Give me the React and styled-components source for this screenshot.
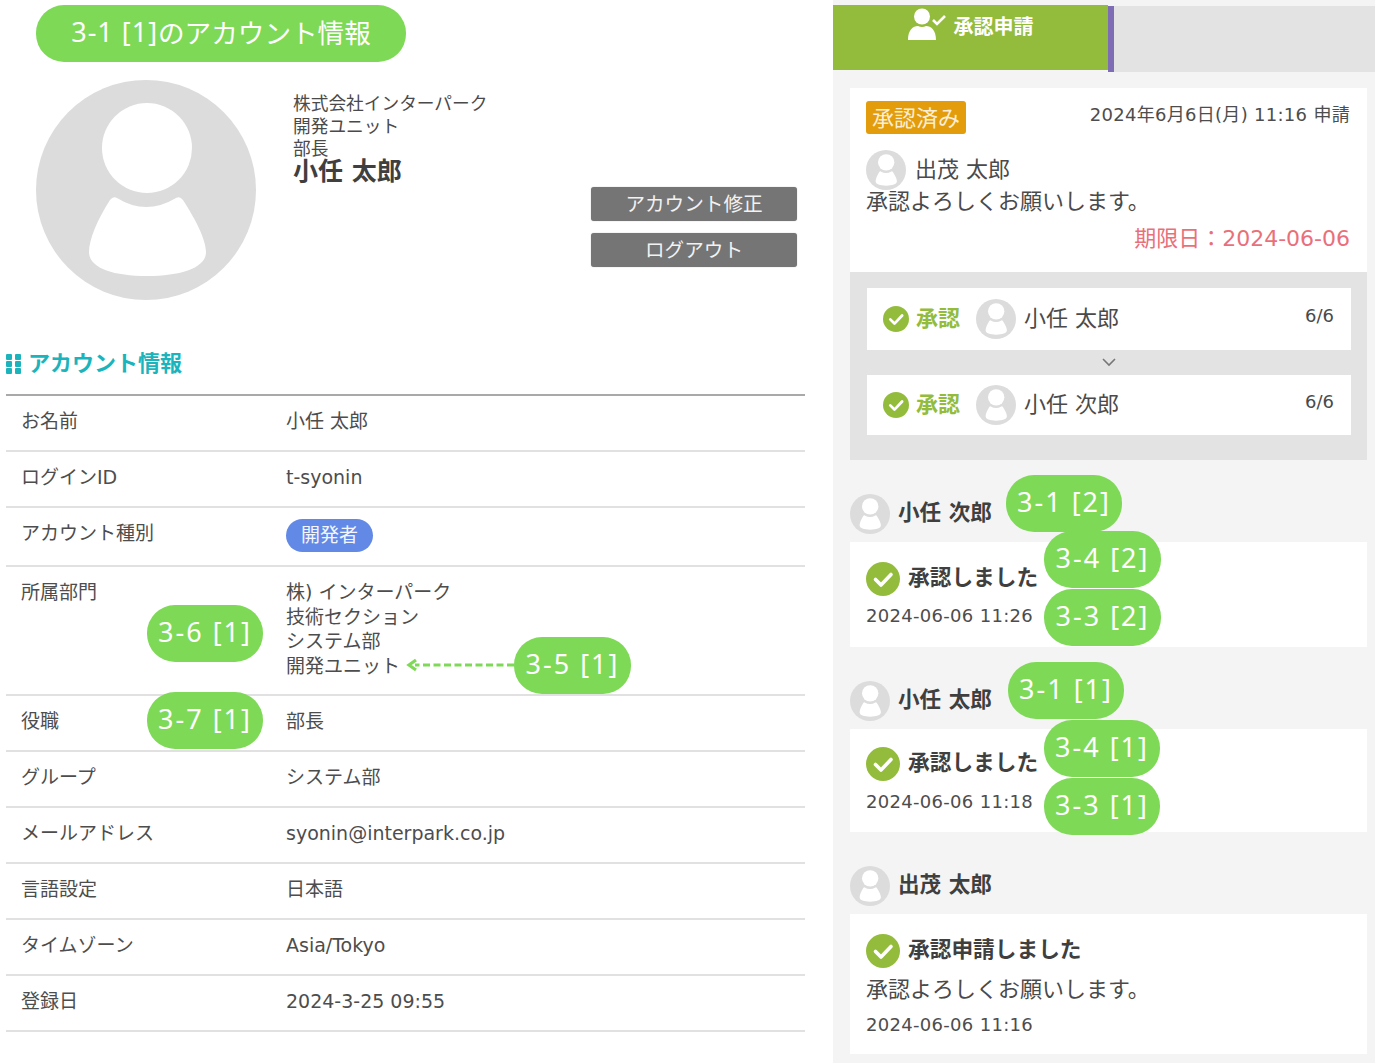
import React from "react";
import styled, { createGlobalStyle } from "styled-components";

const Global = createGlobalStyle`
  html, body { margin: 0; padding: 0; background: #fff; }
  body { font-family: "DejaVu Sans", "Noto Sans CJK JP", sans-serif; color: #4a4a4a; overflow: hidden; }
  * { box-sizing: border-box; }
`;

const Page = styled.div`
  position: relative;
  width: 1375px;
  height: 1063px;
  overflow: hidden;
  display: grid;
  grid-template-columns: 833px 542px;
`;

/* ---------- annotations ---------- */
const Pill = styled.div`
  position: absolute;
  left: ${p => p.$x}px;
  top: ${p => p.$y}px;
  width: ${p => p.$w || 116}px;
  height: 57px;
  border-radius: 28px;
  background: #7ed957;
  color: #fff;
  display: flex;
  align-items: center;
  justify-content: center;
  font-family: "Noto Sans", "Noto Sans CJK JP", sans-serif;
  font-size: 27px;
  white-space: nowrap;
  padding-bottom: 4px;
`;
const PillCode = styled.span`
  letter-spacing: ${p => p.$ls}px;
`;
const PillTail = styled.span`
  font-size: 26.6px;
`;
const ArrowSvg = styled.svg`
  position: absolute;
  left: 405px;
  top: 655px;
`;

/* ---------- left ---------- */
const Left = styled.div`
  padding: 80px 28px 0 6px;
`;
const Profile = styled.div`
  display: grid;
  grid-template-columns: 220px 1fr;
  column-gap: 37px;
  padding-left: 30px;
  height: 220px;
`;
const ProfileBody = styled.div`
  display: flex;
  justify-content: space-between;
  padding: 13px 8px 0 0;
`;
const OrgLine = styled.div`
  font-size: 17.7px;
  line-height: 22.5px;
  color: #4a4a4a;
`;
const OwnerName = styled.div`
  font-size: 25px;
  line-height: 24px;
  font-weight: 700;
  color: #3f3f3f;
  margin-top: -1px;
`;
const Buttons = styled.div`
  display: flex;
  flex-direction: column;
  gap: 12px;
  padding-top: 94px;
`;
const ActionButton = styled.div`
  width: 206px;
  height: 34px;
  padding-bottom: 4px;
  background: #757575;
  color: #f2f2f2;
  border-radius: 3px;
  font-size: 19.6px;
  display: flex;
  align-items: center;
  justify-content: center;
  box-shadow: 0 0 1px #999;
`;
const SectionTitle = styled.h2`
  margin: 47px 0 13px;
  display: flex;
  align-items: center;
  gap: 7px;
  height: 34px;
  font-size: 22px;
  line-height: 34px;
  font-weight: 700;
  color: #1cb4bc;
`;
const Table = styled.div`
  width: 799px;
  border-top: 2px solid #a9a9a9;
`;
const Row = styled.div`
  display: grid;
  grid-template-columns: 265px 1fr;
  padding: 13px 0 16px 15px;
  border-bottom: 2px solid #e1e1e1;
  font-size: 19px;
  line-height: ${p => p.$lh || 25}px;
  color: #4d4d4d;
`;
const Label = styled.div`
  line-height: 25px;
`;
const Value = styled.div`
  font-size: 19px;
`;
const Badge = styled.span`
  display: inline-flex;
  align-items: center;
  justify-content: center;
  width: 87px;
  height: 33px;
  margin: -2px 0 -3px;
  padding-bottom: 2px;
  border-radius: 17px;
  background: #6389e6;
  color: #f4f6ff;
  font-size: 19px;
  vertical-align: top;
`;

/* ---------- right ---------- */
const Right = styled.div`
  background: #f4f4f4;
  padding-top: 5px;
`;
const Tabs = styled.div`
  display: flex;
  height: 67px;
`;
const ActiveTab = styled.div`
  width: 275px;
  height: 65px;
  background: #94bc3c;
  color: #fff;
  display: flex;
  justify-content: center;
  align-items: flex-start;
  gap: 8px;
  padding-top: 3px;
  font-size: 20px;
  font-weight: 700;
`;
const TabLabel = styled.span`
  line-height: 38px;
`;
const IdleTab = styled.div`
  flex: 1;
  height: 66px;
  margin-top: 1px;
  background: #e3e3e3;
  border-left: 6px solid #7e6cb4;
`;
const Content = styled.div`
  padding: 16px 8px 0 17px;
`;
const ApplyCard = styled.div`
  height: 184px;
  background: #fff;
  padding: 13px 17px 0 16px;
`;
const ApplyHead = styled.div`
  display: flex;
  justify-content: space-between;
  align-items: flex-start;
  height: 33px;
`;
const StatusTag = styled.span`
  width: 100px;
  height: 33px;
  padding-bottom: 4px;
  background: #e39c0c;
  color: #fbeed6;
  border-radius: 3px;
  font-size: 22px;
  display: flex;
  align-items: center;
  justify-content: center;
`;
const AppliedAt = styled.span`
  font-size: 18px;
  line-height: 26px;
  letter-spacing: .3px;
  margin-top: 1px;
  color: #4d4d4d;
`;
const Person = styled.div`
  display: flex;
  align-items: center;
  gap: 9px;
  height: 40px;
  margin-top: 16px;
  font-size: 22px;
`;
const NudgedName = styled.span`
  padding-bottom: 6px;
`;
const Message = styled.div`
  font-size: 22px;
  line-height: 26px;
  margin-top: ${p => p.$mt ?? -1}px;
`;
const Deadline = styled.div`
  font-size: 22px;
  line-height: 28px;
  margin-top: 10px;
  text-align: right;
  color: #e9707a;
`;
const FlowBox = styled.div`
  height: 188px;
  background: #e3e3e3;
  padding: 16px 16px 0 17px;
`;
const FlowRow = styled.div`
  height: ${p => p.$h}px;
  background: #fff;
  display: flex;
  align-items: center;
  padding: 0 17px 0 16px;
  font-size: 22px;
`;
const ApproveLabel = styled.span`
  margin: 0 16px 0 7px;
  padding-bottom: 6px;
  font-size: 22px;
  font-weight: 700;
  color: #94bc3c;
`;
const FlowName = styled.span`
  margin-left: 8px;
  padding-bottom: 6px;
`;
const FlowDate = styled.span`
  margin-left: auto;
  font-size: 18px;
  padding-bottom: 8px;
`;
const Chevron = styled.div`
  height: 25px;
  display: flex;
  align-items: center;
  justify-content: center;
  color: #777;
`;
const Group = styled.section`
  margin-top: 33px;
`;
const GroupHead = styled.div`
  display: flex;
  align-items: center;
  gap: 8px;
  height: 41px;
  font-size: 21.6px;
  font-weight: 700;
  color: #3f3f3f;
`;
const LogCard = styled.div`
  height: ${p => p.$h}px;
  margin-top: 8px;
  padding: ${p => p.$top}px 16px 0;
  background: #fff;
`;
const LogAction = styled.div`
  display: flex;
  align-items: center;
  gap: 8px;
  height: 34px;
  font-size: 21.7px;
  font-weight: 700;
  color: #3f3f3f;
`;
const LogText = styled.span`
  padding-bottom: 8px;
`;
const LogTime = styled.div`
  font-size: 18px;
  line-height: 24px;
  margin-top: ${p => p.$mt}px;
  color: #4d4d4d;
  letter-spacing: .3px;
`;

/* ---------- drawings ---------- */
const Avatar = ({ size }) => (
  <svg width={size} height={size} viewBox="0 0 220 220" style={{ flex: "none", display: "block" }}>
    <circle cx="110" cy="110" r="110" fill="#dcdcdc" />
    <circle cx="111" cy="68" r="45" fill="#fff" />
    <path d="M74 120 Q77 116 81 118 Q110 136 140 118 Q144 116 147 120 C160 140 170 160 170 172 C170 188 145 196 111 196 C77 196 53 188 53 172 C53 160 61 140 74 120Z" fill="#fff" />
  </svg>
);
const Check = ({ size }) => (
  <svg width={size} height={size} viewBox="0 0 34 34" style={{ flex: "none", display: "block" }}>
    <circle cx="17" cy="17" r="17" fill="#94bc3c" />
    <path d="M9.5 17.5 L15 23 L25 12.5" fill="none" stroke="#fff" strokeWidth="3.6" strokeLinecap="round" strokeLinejoin="round" />
  </svg>
);
const UserCheck = () => (
  <svg width="38" height="33" viewBox="0 0 38 33">
    <circle cx="14" cy="8.5" r="8" fill="#fff" />
    <path d="M0 32 C0 22 5 18 10 18 Q14 20 18 18 C23 18 28 22 28 32 Z" fill="#fff" />
    <path d="M25 12 L29 16 L37 8" fill="none" stroke="#fff" strokeWidth="2.6" />
  </svg>
);
const Dots = () => (
  <svg width="15" height="20" viewBox="0 0 15 20" style={{ flex: "none" }}>
    {[0, 7, 14].map(y => [0, 9].map(x => <rect key={`${x}-${y}`} x={x} y={y} width="6" height="6" rx="1" fill="#1cb4bc" />))}
  </svg>
);

const rows = [
  ["ログインID", "t-syonin"],
];
const rowsBelow = [
  ["グループ", "システム部"],
  ["メールアドレス", "syonin@interpark.co.jp"],
  ["言語設定", "日本語"],
  ["タイムゾーン", "Asia/Tokyo"],
  ["登録日", "2024-3-25 09:55"],
];
const pills = [
  { x: 36, y: 5, w: 370, t: "3-1 [1]", s: "のアカウント情報" },
  { x: 147, y: 605, t: "3-6 [1]" },
  { x: 147, y: 692, t: "3-7 [1]" },
  { x: 514, y: 637, w: 117, t: "3-5 [1]" },
  { x: 1006, y: 475, t: "3-1 [2]" },
  { x: 1044, y: 531, w: 117, t: "3-4 [2]" },
  { x: 1044, y: 589, w: 117, t: "3-3 [2]" },
  { x: 1008, y: 662, t: "3-1 [1]" },
  { x: 1044, y: 720, t: "3-4 [1]" },
  { x: 1044, y: 778, t: "3-3 [1]" },
];

export default function App() {
  return (
    <Page>
      <Global />
      <Left>
        <Profile>
          <Avatar size={220} />
          <ProfileBody>
            <div>
              <OrgLine>株式会社インターパーク</OrgLine>
              <OrgLine>開発ユニット</OrgLine>
              <OrgLine>部長</OrgLine>
              <OwnerName>小任 太郎</OwnerName>
            </div>
            <Buttons>
              <ActionButton>アカウント修正</ActionButton>
              <ActionButton>ログアウト</ActionButton>
            </Buttons>
          </ProfileBody>
        </Profile>
        <SectionTitle><Dots />アカウント情報</SectionTitle>
        <Table>
          <Row><Label>お名前</Label><Value>小任 太郎</Value></Row>
          {rows.map(([l, v]) => <Row key={l}><Label>{l}</Label><Value>{v}</Value></Row>)}
          <Row $lh={28}><Label>アカウント種別</Label><Value><Badge>開発者</Badge></Value></Row>
          <Row $lh={24.5}>
            <Label>所属部門</Label>
            <Value>株) インターパーク<br />技術セクション<br />システム部<br />開発ユニット</Value>
          </Row>
          <Row><Label>役職</Label><Value>部長</Value></Row>
          {rowsBelow.map(([l, v]) => <Row key={l}><Label>{l}</Label><Value>{v}</Value></Row>)}
        </Table>
      </Left>

      <Right>
        <Tabs>
          <ActiveTab><UserCheck /><TabLabel>承認申請</TabLabel></ActiveTab>
          <IdleTab />
        </Tabs>
        <Content>
          <ApplyCard>
            <ApplyHead>
              <StatusTag>承認済み</StatusTag>
              <AppliedAt>2024年6月6日(月) 11:16 申請</AppliedAt>
            </ApplyHead>
            <Person><Avatar size={40} /><NudgedName>出茂 太郎</NudgedName></Person>
            <Message>承認よろしくお願いします。</Message>
            <Deadline>期限日：2024-06-06</Deadline>
          </ApplyCard>
          <FlowBox>
            <FlowRow $h={62}>
              <Check size={26} /><ApproveLabel>承認</ApproveLabel><Avatar size={40} />
              <FlowName>小任 太郎</FlowName><FlowDate>6/6</FlowDate>
            </FlowRow>
            <Chevron>
              <svg width="14" height="9" viewBox="0 0 14 9"><path d="M1 1 L7 7 L13 1" fill="none" stroke="#777" strokeWidth="1.6" /></svg>
            </Chevron>
            <FlowRow $h={60}>
              <Check size={26} /><ApproveLabel>承認</ApproveLabel><Avatar size={40} />
              <FlowName>小任 次郎</FlowName><FlowDate>6/6</FlowDate>
            </FlowRow>
          </FlowBox>

          <Group>
            <GroupHead><Avatar size={40} /><NudgedName>小任 次郎</NudgedName></GroupHead>
            <LogCard $h={105} $top={20}>
              <LogAction><Check size={34} /><LogText>承認しました</LogText></LogAction>
              <LogTime $mt={8}>2024-06-06 11:26</LogTime>
            </LogCard>
          </Group>
          <Group>
            <GroupHead><Avatar size={40} /><NudgedName>小任 太郎</NudgedName></GroupHead>
            <LogCard $h={103} $top={18}>
              <LogAction><Check size={34} /><LogText>承認しました</LogText></LogAction>
              <LogTime $mt={9}>2024-06-06 11:18</LogTime>
            </LogCard>
          </Group>
          <Group>
            <GroupHead><Avatar size={40} /><NudgedName>出茂 太郎</NudgedName></GroupHead>
            <LogCard $h={140} $top={20}>
              <LogAction><Check size={34} /><LogText>承認申請しました</LogText></LogAction>
              <Message $mt={9}>承認よろしくお願いします。</Message>
              <LogTime $mt={10}>2024-06-06 11:16</LogTime>
            </LogCard>
          </Group>
        </Content>
      </Right>

      {pills.map(p => (
        <Pill key={`${p.x}-${p.y}`} $x={p.x} $y={p.y} $w={p.w}>
          <PillCode $ls={p.s ? 1 : 2}>{p.t}</PillCode>
          {p.s && <PillTail>{p.s}</PillTail>}
        </Pill>
      ))}
      <ArrowSvg width="110" height="20" viewBox="0 0 110 20">
        <path d="M109 10 H10" stroke="#7ed957" strokeWidth="3.2" strokeDasharray="7 3.5" fill="none" />
        <path d="M11 5 L4 10 L11 15" stroke="#7ed957" strokeWidth="3.2" fill="none" />
      </ArrowSvg>
    </Page>
  );
}
